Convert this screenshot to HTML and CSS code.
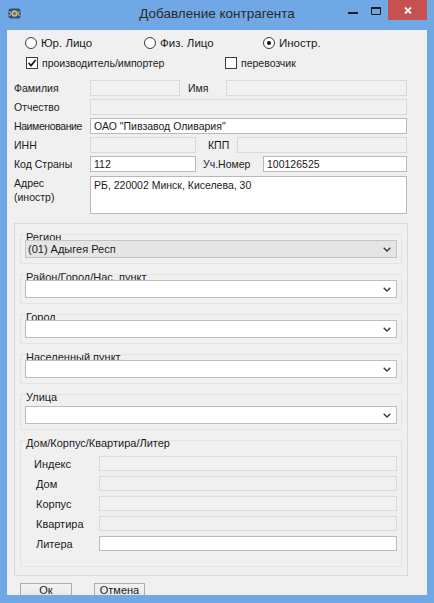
FILE: index.html
```html
<!DOCTYPE html>
<html lang="ru">
<head>
<meta charset="utf-8">
<title>Добавление контрагента</title>
<link rel="stylesheet" href="styles.css">
</head>
<body>
<div class="window">
  <div class="titlebar">
    <div class="tb-left">
      <svg class="app-icon" width="13" height="11" viewBox="0 0 13 11">
        <rect x="0.5" y="0.5" width="12" height="10" rx="2" fill="#2f4f8f"/>
        <circle cx="6.5" cy="5.5" r="3.2" fill="#d9b948"/>
        <circle cx="6.5" cy="5.5" r="1.6" fill="#4a78c0"/>
        <path d="M1.5 3 L3 5.5 L1.5 8 M11.5 3 L10 5.5 L11.5 8" stroke="#e6c95a" stroke-width="1" fill="none"/>
      </svg>
    </div>
    <div class="title">Добавление контрагента</div>
    <div class="tb-right">
      <span class="wbtn wbtn-min"><svg width="10" height="2" viewBox="0 0 10 2"><rect width="10" height="2" fill="#1e1e1e"/></svg></span>
      <span class="wbtn wbtn-max"><svg width="10" height="8" viewBox="0 0 10 8"><path d="M0.5 1 H9.5 V7.5 H0.5 Z" fill="none" stroke="#1e1e1e" stroke-width="1"/><rect x="0" y="0" width="10" height="2" fill="#1e1e1e"/></svg></span>
      <span class="wbtn wbtn-close"><svg width="8" height="7" viewBox="0 0 8 7"><path d="M1 0.5 L7 6.5 M7 0.5 L1 6.5" stroke="#fff" stroke-width="1.8"/></svg></span>
    </div>
  </div>

  <div class="client">
    <div class="radios">
      <div class="radio"><span class="rb"></span><span>Юр. Лицо</span></div>
      <div class="radio"><span class="rb"></span><span>Физ. Лицо</span></div>
      <div class="radio"><span class="rb rb-on"></span><span>Иностр.</span></div>
    </div>

    <div class="checks">
      <div class="check check-first">
        <span class="cb"><svg width="10" height="10" viewBox="0 0 10 10"><path d="M1.5 5 L4 7.6 L8.6 2" fill="none" stroke="#1a1a1a" stroke-width="1.7"/></svg></span>
        <span>производитель/импортер</span>
      </div>
      <div class="check">
        <span class="cb"></span>
        <span>перевозчик</span>
      </div>
    </div>

    <div class="fields">
      <div class="row">
        <span class="lbl">Фамилия</span>
        <span class="in in-off w90"></span>
        <span class="lbl2 l-imya">Имя</span>
        <span class="in in-off grow"></span>
      </div>
      <div class="row">
        <span class="lbl">Отчество</span>
        <span class="in in-off grow"></span>
      </div>
      <div class="row">
        <span class="lbl lbl-tight">Наименование</span>
        <span class="in in-on grow">ОАО "Пивзавод Оливария"</span>
      </div>
      <div class="row">
        <span class="lbl">ИНН</span>
        <span class="in in-off w106"></span>
        <span class="lbl2 l-kpp">КПП</span>
        <span class="in in-off grow"></span>
      </div>
      <div class="row">
        <span class="lbl">Код Страны</span>
        <span class="in in-on w106">112</span>
        <span class="lbl2 l-uch">Уч.Номер</span>
        <span class="in in-on grow">100126525</span>
      </div>
      <div class="row row-addr">
        <span class="lbl lbl-addr">Адрес<br>(иностр)</span>
        <span class="in in-on grow area">РБ, 220002 Минск, Киселева, 30</span>
      </div>
    </div>

    <div class="outer">
      <div class="group">
        <div class="glabel">Регион</div>
        <div class="combo combo-ro"><span>(01) Адыгея Респ</span><svg class="chev" width="8" height="5" viewBox="0 0 8 5"><path d="M0.7 0.7 L4 4 L7.3 0.7" fill="none" stroke="#333" stroke-width="1.3"/></svg></div>
      </div>
      <div class="group">
        <div class="glabel">Район/Город/Нас. пункт</div>
        <div class="combo"><span></span><svg class="chev" width="8" height="5" viewBox="0 0 8 5"><path d="M0.7 0.7 L4 4 L7.3 0.7" fill="none" stroke="#333" stroke-width="1.3"/></svg></div>
      </div>
      <div class="group">
        <div class="glabel">Город</div>
        <div class="combo"><span></span><svg class="chev" width="8" height="5" viewBox="0 0 8 5"><path d="M0.7 0.7 L4 4 L7.3 0.7" fill="none" stroke="#333" stroke-width="1.3"/></svg></div>
      </div>
      <div class="group">
        <div class="glabel">Населенный пункт</div>
        <div class="combo"><span></span><svg class="chev" width="8" height="5" viewBox="0 0 8 5"><path d="M0.7 0.7 L4 4 L7.3 0.7" fill="none" stroke="#333" stroke-width="1.3"/></svg></div>
      </div>
      <div class="group">
        <div class="glabel">Улица</div>
        <div class="combo combo-low"><span></span><svg class="chev" width="8" height="5" viewBox="0 0 8 5"><path d="M0.7 0.7 L4 4 L7.3 0.7" fill="none" stroke="#333" stroke-width="1.3"/></svg></div>
      </div>
      <div class="group group-house">
        <div class="glabel">Дом/Корпус/Квартира/Литер</div>
        <div class="house">
          <span class="hl hl-idx">Индекс</span><span class="in in-off"></span>
          <span class="hl">Дом</span><span class="in in-off"></span>
          <span class="hl">Корпус</span><span class="in in-off"></span>
          <span class="hl">Квартира</span><span class="in in-off"></span>
          <span class="hl">Литера</span><span class="in in-on"></span>
        </div>
      </div>
    </div>

    <div class="buttons">
      <span class="btn btn-ok">Ок</span>
      <span class="btn btn-cancel">Отмена</span>
    </div>
  </div>
</div>
</body>
</html>
```

FILE: styles.css
```css
html, body {
  margin: 0;
  padding: 0;
}

body {
  font-family: "Liberation Sans", Arial, sans-serif;
  font-size: 11px;
  color: #1b1b1b;
  background: #70a8e6;
}

.window {
  width: 434px;
  height: 603px;
  background: #70a8e6;
  display: flex;
  flex-direction: column;
  overflow: hidden;
}

/* ---------- title bar ---------- */
.titlebar {
  height: 30px;
  flex: none;
  display: grid;
  grid-template-columns: 1fr auto 1fr;
  align-items: start;
}

.tb-left {
  padding: 8px 0 0 8px;
  line-height: 0;
}

.title {
  font-family: "Liberation Sans", Arial, sans-serif;
  font-size: 13.5px;
  line-height: 18px;
  padding-top: 5px;
  color: #2a2a2a;
  white-space: nowrap;
}

.tb-right {
  justify-self: end;
  display: flex;
  margin-right: 7px;
}

.wbtn {
  height: 20px;
  display: flex;
  align-items: center;
  justify-content: center;
}

.wbtn-min {
  width: 26px;
  padding-top: 6px;
  padding-left: 4px;
  box-sizing: border-box;
}

.wbtn-max {
  width: 24px;
  align-items: flex-start;
  padding-top: 7px;
  box-sizing: border-box;
}

.wbtn-close {
  width: 39px;
  background: #c75050;
  padding-top: 1px;
  box-sizing: border-box;
}

/* ---------- client area ---------- */
.client {
  height: 565px;
  flex: none;
  margin: 0 7px;
  background: #f0f0f0;
  overflow: hidden;
}

.radios {
  display: flex;
  padding: 7px 0 0 18px;
  height: 12px;
}

.radio {
  width: 119px;
  display: flex;
  align-items: center;
  gap: 4px;
  line-height: 12px;
  font-size: 11.5px;
}

.rb {
  width: 12px;
  height: 12px;
  box-sizing: border-box;
  border: 1px solid #3a3a3a;
  border-radius: 50%;
  background: #fff;
  display: flex;
  align-items: center;
  justify-content: center;
  flex: none;
}

.rb-on::after {
  content: "";
  width: 4px;
  height: 4px;
  border-radius: 50%;
  background: #111;
}

.checks {
  display: flex;
  margin-top: 7px;
  padding-left: 19px;
  height: 13px;
}

.check {
  display: flex;
  align-items: center;
  gap: 4px;
  font-size: 10.5px;
}

.check-first {
  width: 199px;
}

.cb {
  width: 12px;
  height: 12px;
  box-sizing: border-box;
  border: 1px solid #3a3a3a;
  background: #fff;
  display: flex;
  align-items: center;
  justify-content: center;
  flex: none;
}

/* ---------- fields ---------- */
.fields {
  padding: 0 20px 0 7px;
  margin-top: 11px;
  font-size: 10.5px;
}

.row {
  display: flex;
  align-items: center;
  height: 16px;
  margin-top: 3px;
}

.row:first-child {
  margin-top: 0;
}

.row-addr {
  height: 38px;
  align-items: flex-start;
  margin-top: 4px;
}

.lbl {
  width: 76px;
  flex: none;
  white-space: nowrap;
}

.lbl-tight {
  letter-spacing: -0.4px;
}

.lbl-addr {
  line-height: 14px;
}

.lbl2 {
  flex: none;
  white-space: nowrap;
}

.l-imya {
  margin-left: 8px;
  width: 38px;
}

.l-kpp {
  margin-left: 12px;
  width: 29px;
}

.l-uch {
  margin-left: 7px;
  width: 60px;
}

.in {
  display: block;
  height: 16px;
  box-sizing: border-box;
  border: 1px solid #d8d8d8;
  padding: 0 3px;
  line-height: 14px;
  white-space: nowrap;
  overflow: hidden;
}

.in-off {
  background: #f1f1f1;
  border-color: #d9d9d9;
}

.in-on {
  background: #fff;
  border-color: #b9b9b9;
}

.area {
  height: 38px;
  padding-top: 1px;
}

.w90 {
  width: 90px;
  flex: none;
}

.w106 {
  width: 106px;
  flex: none;
}

.grow {
  flex: 1;
}

/* ---------- groups ---------- */
.outer {
  margin: 9px 19px 0 7px;
  border: 1px solid #dadada;
  padding: 10px 5px 8px 5px;
}

.group {
  border: 1px solid #e4e4e4;
  padding: 0 4px 5px 4px;
  margin-top: 10px;
}

.group:first-child {
  margin-top: 0;
}

.glabel {
  line-height: 12px;
  margin-top: -4px;
  margin-bottom: -3px;
  padding-left: 1px;
  white-space: nowrap;
}

.combo {
  position: relative;
  height: 18px;
  box-sizing: border-box;
  border: 1px solid #bdbdbd;
  background: #fff;
  display: flex;
  align-items: center;
  justify-content: space-between;
  padding: 0 5px 0 2px;
}

.combo-ro {
  background: #e5e5e5;
  border-color: #c4c4c4;
}

.combo-low {
  margin-top: 6px;
}

.chev {
  flex: none;
}

.group-house {
  padding-bottom: 15px;
}

.house {
  margin-top: 10px;
  display: grid;
  grid-template-columns: 74px 1fr;
  grid-auto-rows: 15px;
  row-gap: 5px;
  align-items: center;
}

.house .in {
  height: 15px;
}

.hl {
  padding-left: 11px;
}

.hl-idx {
  padding-left: 9px;
}

/* ---------- buttons ---------- */
.buttons {
  display: flex;
  gap: 22px;
  margin-top: 7px;
  padding-left: 13px;
}

.btn {
  height: 20px;
  box-sizing: border-box;
  border: 1px solid #adadad;
  background: linear-gradient(#f2f2f2, #e4e4e4);
  display: flex;
  align-items: flex-start;
  justify-content: center;
  padding-top: 1px;
  line-height: 10px;
}

.btn-ok {
  width: 52px;
}

.btn-cancel {
  width: 51px;
}
```
